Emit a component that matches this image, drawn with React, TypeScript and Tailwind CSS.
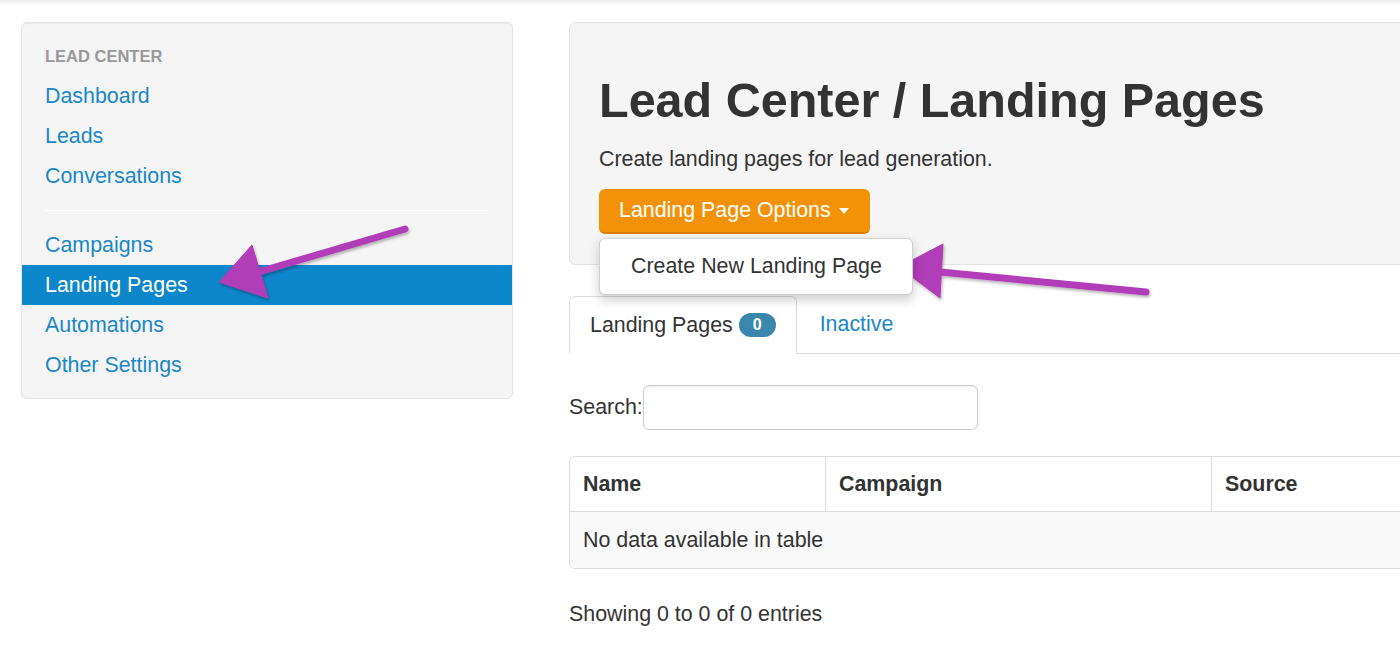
const navTop = ["Dashboard", "Leads", "Conversations"];
const navBottom = ["Campaigns", "Landing Pages", "Automations", "Other Settings"];

function Arrows() {
  return (
    <svg className="absolute top-0 left-0 pointer-events-none" width="1400" height="654" viewBox="0 0 1400 654">
      <defs>
        <filter id="arrowShadow" x="-20%" y="-20%" width="140%" height="140%">
          <feDropShadow dx="1" dy="2" stdDeviation="1.5" floodColor="#000" floodOpacity="0.3" />
        </filter>
      </defs>
      <g fill="#b23db8" stroke="#b23db8" filter="url(#arrowShadow)">
        <line x1="405" y1="229" x2="245" y2="276" strokeWidth="7" strokeLinecap="round" />
        <polygon points="219,282 252,245 268,298" strokeWidth="1" strokeLinejoin="round" />
        <line x1="1146" y1="292" x2="930" y2="271" strokeWidth="7" strokeLinecap="round" />
        <polygon points="899,267 943,244 940,298" strokeWidth="1" strokeLinejoin="round" />
      </g>
    </svg>
  );
}

export default function App() {
  return (
    <div className="relative w-[1400px] h-[654px] overflow-hidden bg-white text-[#333] font-['Liberation_Sans',Arial,sans-serif] text-[21.4px]">
      <div className="h-[6px] bg-gradient-to-b from-[#ececec] to-white" />
      <div className="flex items-start pl-[21px] pt-[16px] gap-[56px]">
        {/* sidebar */}
        <div className="w-[492px] shrink-0 bg-[#f5f5f5] border border-[#e3e3e3] rounded-[6px] py-[13px] shadow-[inset_0_1px_1px_rgba(0,0,0,0.05)]">
          <div className="h-[40px] flex items-center px-[23px] text-[16.5px] font-bold uppercase text-[#999]">Lead Center</div>
          {navTop.map(n => (
            <div key={n} className="h-[40px] flex items-center px-[23px] text-[#1a87c8] leading-[30px]">{n}</div>
          ))}
          <div className="mx-[23px] my-[14px] h-px bg-[#e2e2e2] border-b border-white" />
          {navBottom.map(n => (
            <div
              key={n}
              className={
                n === "Landing Pages"
                  ? "h-[40px] flex items-center px-[23px] bg-[#0d87cb] text-white leading-[30px]"
                  : "h-[40px] flex items-center px-[23px] text-[#1a87c8] leading-[30px]"
              }
            >
              {n}
            </div>
          ))}
        </div>

        {/* main */}
        <div className="w-[1000px] shrink-0">
          <div className="bg-[#f5f5f5] border border-[#e3e3e3] rounded-[6px] pl-[29px] pt-[48px] pb-[30px]">
            <h1 className="text-[48.5px] font-bold leading-[58px] text-[#333]">Lead Center / Landing Pages</h1>
            <p className="mt-[15px] leading-[30px]">Create landing pages for lead generation.</p>
            <div className="relative mt-[15px] w-[271px]">
              <button className="h-[45px] w-[271px] flex items-center pl-[20px] rounded-[6px] bg-[#f39206] border-b-2 border-[#dc8402] text-white text-[21.4px]">
                Landing Page Options
                <span className="ml-[8px] w-0 h-0 border-l-[5px] border-r-[5px] border-t-[6px] border-l-transparent border-r-transparent border-t-white" />
              </button>
              <div className="absolute left-0 top-[49px] w-[314px] h-[57px] bg-white border border-[rgba(0,0,0,0.18)] rounded-[6px] shadow-[0_5px_12px_rgba(0,0,0,0.2)] flex items-center pl-[31px] z-10">
                Create New Landing Page
              </div>
            </div>
          </div>

          {/* tabs */}
          <div className="mt-[31px] flex border-b border-[#ddd]">
            <div className="-mb-px h-[58px] flex items-center px-[20px] bg-white border border-[#ddd] border-b-transparent rounded-t-[6px]">
              Landing Pages
              <span className="ml-[6px] h-[24px] px-[14px] rounded-full bg-[#3a87ad] text-white text-[16px] font-bold flex items-center">0</span>
            </div>
            <div className="ml-[3px] h-[57px] flex items-center px-[20px] text-[#1a87c8]">Inactive</div>
          </div>

          {/* search */}
          <div className="mt-[31px] flex items-center">
            <span>Search:</span>
            <input className="h-[45px] w-[335px] border border-[#ccc] rounded-[6px] bg-white shadow-[inset_0_1px_1px_rgba(0,0,0,0.075)] outline-none px-2" />
          </div>

          {/* table */}
          <div className="mt-[26px] border border-[#ddd] rounded-[6px] overflow-hidden">
            <div className="flex h-[55px] font-bold border-b border-[#ddd]">
              <div className="w-[255px] flex items-center px-[13px]">Name</div>
              <div className="w-[386px] flex items-center px-[13px] border-l border-[#ddd]">Campaign</div>
              <div className="flex-1 flex items-center px-[13px] border-l border-[#ddd]">Source</div>
            </div>
            <div className="h-[56px] flex items-center px-[13px] bg-[#f9f9f9]">No data available in table</div>
          </div>

          <div className="mt-[30px] leading-[30px]">Showing 0 to 0 of 0 entries</div>
        </div>
      </div>
      <Arrows />
    </div>
  );
}
